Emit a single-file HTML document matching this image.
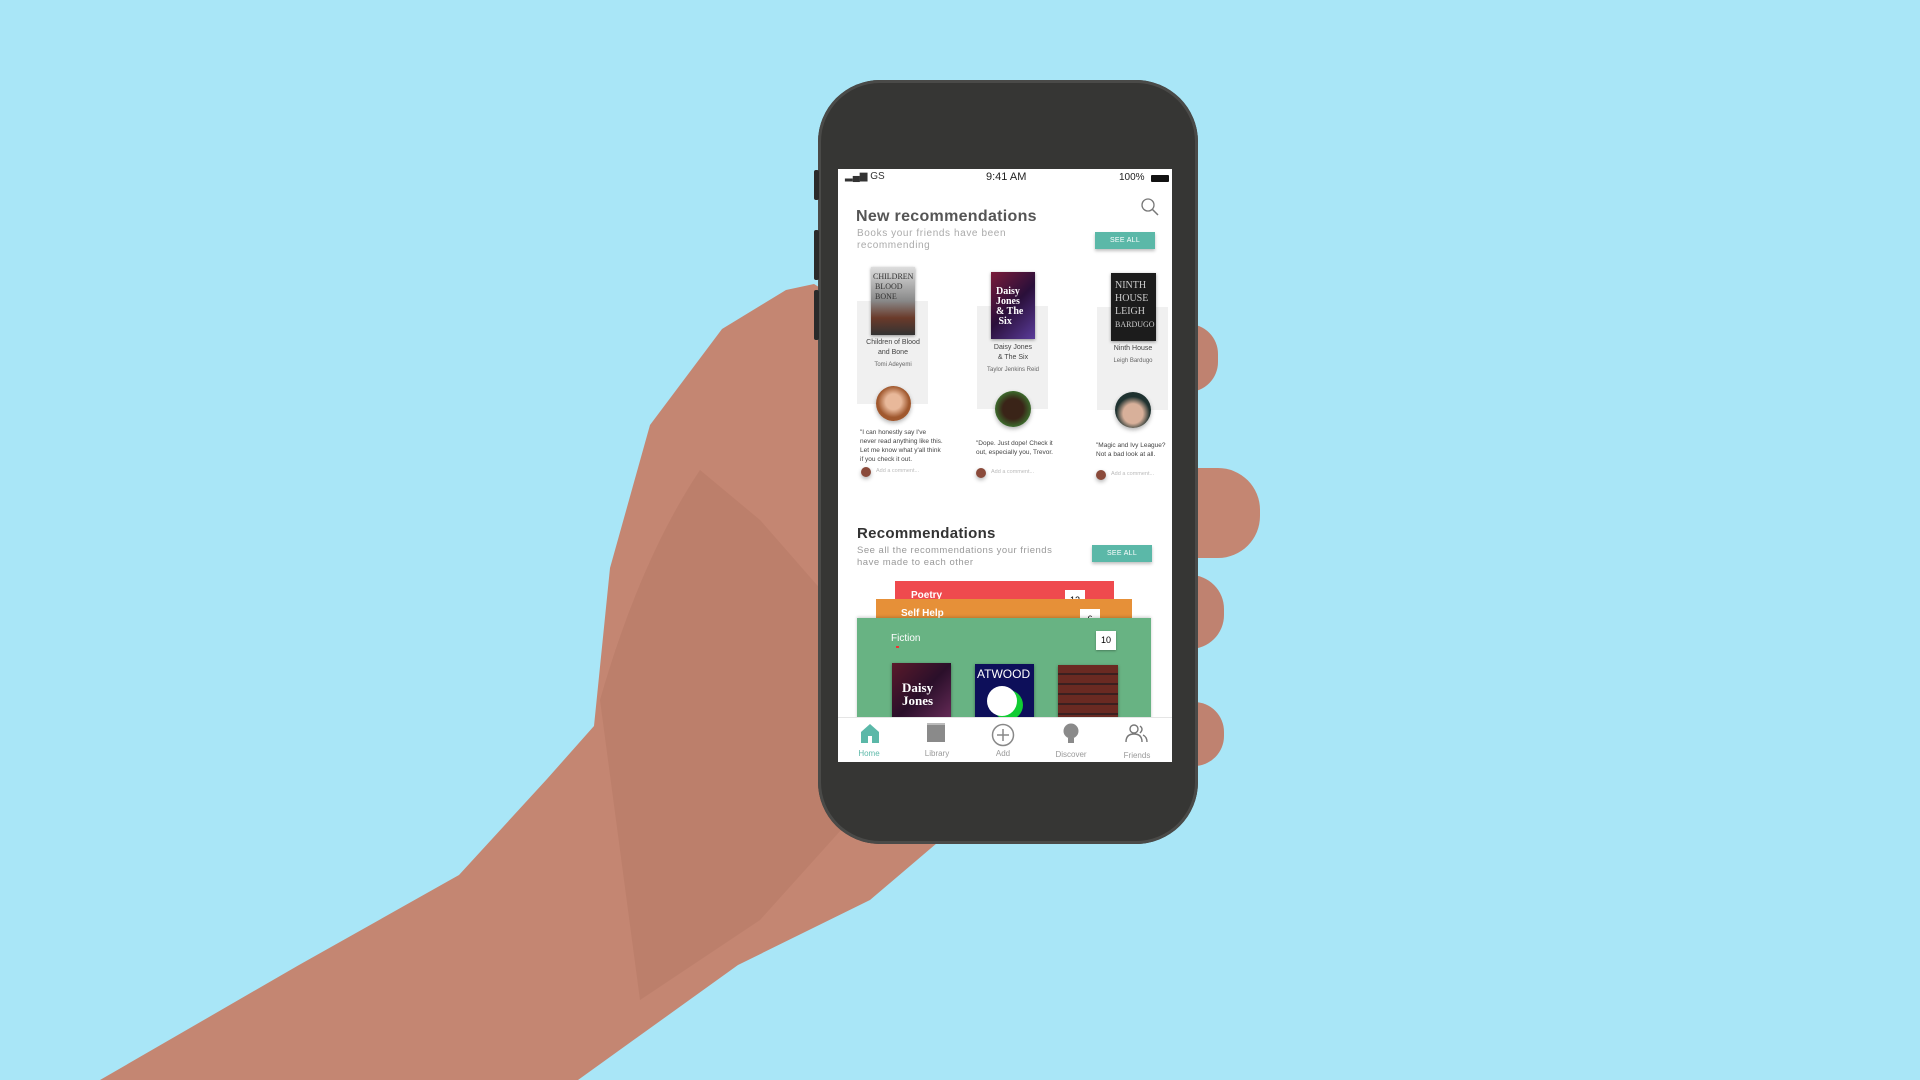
<!DOCTYPE html>
<html><head><meta charset="utf-8"><style>
*{margin:0;padding:0;box-sizing:border-box}
body{width:1920px;height:1080px;overflow:hidden;background:#a9e6f7;position:relative;font-family:"Liberation Sans",sans-serif}
.a{position:absolute}
.t{position:absolute;white-space:nowrap}
.cover{position:absolute;box-shadow:0 1px 3px rgba(0,0,0,.4)}
.panel{position:absolute;background:#f0f0f0}
.av{position:absolute;border-radius:50%;box-shadow:0 2px 4px rgba(0,0,0,.3)}
.small{font-size:7px;color:#444;text-align:center;line-height:10px}
.q{font-size:6.5px;color:#444;line-height:9px}
.btn{position:absolute;background:#5bb8a8;color:#fff;font-size:7px;text-align:center;box-shadow:0 2px 3px rgba(0,0,0,.25);letter-spacing:.3px}
.nl{position:absolute;font-size:8px;color:#999;text-align:center;width:50px}
</style></head><body>
<svg class="a" style="left:0;top:0" width="1920" height="1080" viewBox="0 0 1920 1080">
<path d="M100,1080 L299,965 L459,875 L547,779 L594,726 L610,568 L650,425 L722,329 L786,290 L814,284 L840,300 L850,800 L937,843 L870,900 L738,965 L578,1080 Z" fill="#c48672"/>
<path d="M600,700 Q640,560 700,470 L760,520 L830,600 L850,820 L760,920 L640,1000 Z" fill="#b0725f" opacity=".35"/>
<rect x="1150" y="324" width="68" height="68" rx="30" fill="#bf8270"/>
<rect x="1150" y="468" width="110" height="90" rx="42" fill="#c48672"/>
<rect x="1150" y="575" width="74" height="74" rx="34" fill="#bf8270"/>
<rect x="1150" y="702" width="74" height="64" rx="30" fill="#bf8270"/>
</svg>
<div class="a" style="left:818px;top:80px;width:380px;height:764px;background:#363634;border-radius:62px;box-shadow:inset 0 0 0 3px #4a4a48"></div>
<div class="a" style="left:814px;top:170px;width:5px;height:30px;background:#2a2a2a;border-radius:2px"></div>
<div class="a" style="left:814px;top:230px;width:5px;height:50px;background:#2a2a2a;border-radius:2px"></div>
<div class="a" style="left:814px;top:290px;width:5px;height:50px;background:#2a2a2a;border-radius:2px"></div>
<div class="a" style="left:838px;top:169px;width:334px;height:593px;background:#fff;overflow:hidden"></div>
<div class="t" style="left:845px;top:171px;font-size:10px;color:#333">▂▄▆ GS</div>
<div class="t" style="left:986px;top:171px;font-size:11px;color:#222">9:41 AM</div>
<div class="t" style="left:1119px;top:172px;font-size:10px;color:#222">100%</div>
<div class="a" style="left:1151px;top:175px;width:18px;height:7px;background:#111;border-radius:1px"></div>
<svg class="a" style="left:1140px;top:197px" width="20" height="20" viewBox="0 0 20 20"><circle cx="8" cy="8" r="6" fill="none" stroke="#777" stroke-width="1.3"/><path d="M12.5 12.5 L18 18" stroke="#777" stroke-width="1.5"/></svg>
<div class="t" style="left:856px;top:208px;font-size:16px;font-weight:bold;color:#555;letter-spacing:.3px">New recommendations</div>
<div class="t" style="left:857px;top:228px;font-size:10px;color:#aaa;letter-spacing:.6px;line-height:12px">Books your friends have been<br>recommending</div>
<div class="btn" style="left:1095px;top:232px;width:60px;height:17px;line-height:17px">SEE ALL</div>
<div class="panel" style="left:857px;top:301px;width:71px;height:103px"></div>
<div class="panel" style="left:977px;top:306px;width:71px;height:103px"></div>
<div class="panel" style="left:1097px;top:307px;width:71px;height:103px"></div>
<div class="cover" style="left:871px;top:267px;width:44px;height:68px;background:linear-gradient(#ddd,#888 50%,#6a3a2a 75%,#333)"></div>
<div class="t" style="left:873px;top:272px;font-size:8px;color:#333;font-family:'Liberation Serif',serif;line-height:10px">CHILDREN<br>&nbsp;BLOOD<br>&nbsp;BONE</div>
<div class="cover" style="left:991px;top:272px;width:44px;height:67px;background:linear-gradient(135deg,#7a1c3a,#2a0f3a 50%,#5a3c9a)"></div>
<div class="t" style="left:996px;top:287px;font-size:10px;color:#fff;font-weight:bold;font-family:'Liberation Serif',serif;line-height:10px">Daisy<br>Jones<br>&amp; The<br>&nbsp;Six</div>
<div class="cover" style="left:1111px;top:273px;width:45px;height:68px;background:#1c1c1c"></div>
<div class="t" style="left:1115px;top:279px;font-size:10px;color:#ccc;font-family:'Liberation Serif',serif;line-height:13px">NINTH<br>HOUSE<br>LEIGH<br><span style="font-size:8px">BARDUGO</span></div>
<div class="t small" style="left:857px;top:338px;width:72px">Children of Blood<br>and Bone</div>
<div class="t small" style="left:857px;top:360px;width:72px;font-size:6px;color:#666">Tomi Adeyemi</div>
<div class="t small" style="left:977px;top:343px;width:72px">Daisy Jones<br>&amp; The Six</div>
<div class="t small" style="left:977px;top:365px;width:72px;font-size:6px;color:#666">Taylor Jenkins Reid</div>
<div class="t small" style="left:1097px;top:344px;width:72px">Ninth House</div>
<div class="t small" style="left:1097px;top:356px;width:72px;font-size:6px;color:#666">Leigh Bardugo</div>
<div class="av" style="left:876px;top:386px;width:35px;height:35px;background:radial-gradient(circle at 50% 45%,#e8b89a 30%,#a0582e 60%)"></div>
<div class="av" style="left:995px;top:391px;width:36px;height:36px;background:radial-gradient(circle at 50% 50%,#3a2418 40%,#3c6a2c 70%)"></div>
<div class="av" style="left:1115px;top:392px;width:36px;height:36px;background:radial-gradient(circle at 50% 60%,#d8b09a 35%,#1f3230 60%)"></div>
<div class="t q" style="left:860px;top:428px">"I can honestly say I've<br>never read anything like this.<br>Let me know what y'all think<br>if you check it out.</div>
<div class="t q" style="left:976px;top:439px">"Dope.  Just dope! Check it<br>out, especially you, Trevor.</div>
<div class="t q" style="left:1096px;top:441px">"Magic and Ivy League?<br>Not a bad look at all.</div>
<div class="av" style="left:861px;top:467px;width:10px;height:10px;background:#8a4a3a"></div>
<div class="t" style="left:876px;top:468px;font-size:5.5px;color:#bbb">Add a comment...</div>
<div class="av" style="left:976px;top:468px;width:10px;height:10px;background:#8a4a3a"></div>
<div class="t" style="left:991px;top:469px;font-size:5.5px;color:#bbb">Add a comment...</div>
<div class="av" style="left:1096px;top:470px;width:10px;height:10px;background:#8a4a3a"></div>
<div class="t" style="left:1111px;top:471px;font-size:5.5px;color:#bbb">Add a comment...</div>
<div class="t" style="left:857px;top:525px;font-size:15px;font-weight:bold;color:#333;letter-spacing:.3px">Recommendations</div>
<div class="t" style="left:857px;top:545px;font-size:9.5px;color:#999;letter-spacing:.5px;line-height:12px">See all the recommendations your friends<br>have made to each other</div>
<div class="btn" style="left:1092px;top:545px;width:60px;height:17px;line-height:17px">SEE ALL</div>
<div class="a" style="left:895px;top:581px;width:219px;height:40px;background:#ef4a4e;overflow:hidden"><div class="t" style="left:16px;top:9px;color:#fff;font-size:10px;font-weight:bold">Poetry</div><div class="a" style="left:170px;top:9px;width:20px;height:20px;background:#fff;font-size:9px;text-align:center;line-height:20px">12</div></div>
<div class="a" style="left:876px;top:599px;width:256px;height:40px;background:#e69038;overflow:hidden"><div class="t" style="left:25px;top:9px;color:#fff;font-size:10px;font-weight:bold">Self Help</div><div class="a" style="left:204px;top:10px;width:20px;height:20px;background:#fff;font-size:9px;text-align:center;line-height:20px">6</div></div>
<div class="a" style="left:857px;top:618px;width:294px;height:110px;background:#68b383;box-shadow:0 -1px 3px rgba(0,0,0,.2)"></div>
<div class="t" style="left:891px;top:633px;color:#fff;font-size:10px">Fiction</div>
<div class="a" style="left:896px;top:646px;width:3px;height:2px;background:#e33"></div>
<div class="a" style="left:1096px;top:631px;width:20px;height:19px;background:#fff;font-size:9px;text-align:center;line-height:19px;box-shadow:0 1px 2px rgba(0,0,0,.3)">10</div>
<div class="cover" style="left:892px;top:663px;width:59px;height:60px;background:linear-gradient(135deg,#5a1a2a,#2a0f2a 50%,#6a2c5a);overflow:hidden"><div class="t" style="left:10px;top:18px;color:#fff;font-size:13px;font-weight:bold;font-family:'Liberation Serif',serif;line-height:13px">Daisy<br>Jones</div></div>
<div class="cover" style="left:975px;top:664px;width:59px;height:60px;background:#0d0f5a;overflow:hidden"><div class="t" style="left:2px;top:3px;color:#fff;font-size:12px">ATWOOD</div><div class="a" style="left:12px;top:22px;width:30px;height:30px;border-radius:50%;background:#fff;box-shadow:6px 4px 0 #1c3"></div></div>
<div class="cover" style="left:1058px;top:665px;width:60px;height:58px;background:repeating-linear-gradient(#6a2a22 0 8px,#3a2020 8px 10px)"></div>
<div class="a" style="left:838px;top:717px;width:334px;height:45px;background:#fff;border-top:1px solid #e5e5e5"></div>
<svg class="a" style="left:859px;top:722px" width="22" height="22" viewBox="0 0 22 22"><path d="M2 10 L11 2 L20 10 L20 21 L2 21 Z" fill="#5bb8a8"/><rect x="9" y="14" width="4" height="7" fill="#fff"/></svg>
<div class="a" style="left:927px;top:723px;width:18px;height:19px;background:#8a8a8a;border-top:2px solid #bbb"></div>
<svg class="a" style="left:991px;top:723px" width="24" height="24" viewBox="0 0 24 24"><circle cx="12" cy="12" r="10.5" fill="none" stroke="#888" stroke-width="1.5"/><path d="M12 6v12M6 12h12" stroke="#888" stroke-width="1.5"/></svg>
<svg class="a" style="left:1061px;top:723px" width="20" height="22" viewBox="0 0 20 22"><circle cx="10" cy="8" r="7.5" fill="#8a8a8a"/><rect x="7" y="15" width="6" height="5" fill="#8a8a8a"/></svg>
<svg class="a" style="left:1124px;top:724px" width="26" height="20" viewBox="0 0 26 20"><circle cx="10" cy="5" r="4" fill="none" stroke="#777" stroke-width="1.4"/><path d="M2 18 Q2 10 10 10 Q18 10 18 18" fill="none" stroke="#777" stroke-width="1.4"/><path d="M16 2 Q20 5 16 9 M19 11 Q23 13 23 18" fill="none" stroke="#777" stroke-width="1.4"/></svg>
<div class="nl" style="left:844px;top:749px;color:#5bb8a8">Home</div>
<div class="nl" style="left:912px;top:749px">Library</div>
<div class="nl" style="left:978px;top:749px">Add</div>
<div class="nl" style="left:1046px;top:750px">Discover</div>
<div class="nl" style="left:1112px;top:751px">Friends</div>
</body></html>
